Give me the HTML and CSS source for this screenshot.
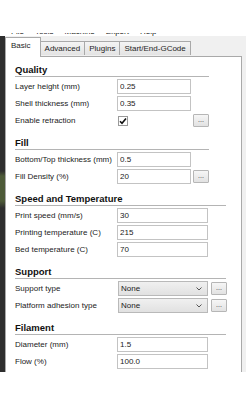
FILE: index.html
```html
<!DOCTYPE html>
<html lang="en">
<head>
    <meta charset="UTF-8">
    <meta name="viewport" content="width=device-width, initial-scale=1.0">
    <title>Cura - Basic settings</title>
    <link rel="stylesheet" href="styles.css">
</head>
<body>
    <div class="window">
        <div class="menubar">
            <div class="menu-items">
                <span>File</span>
                <span>Tools</span>
                <span>Machine</span>
                <span>Expert</span>
                <span>Help</span>
            </div>
        </div>

        <div class="frame">
            <div class="viewport-edge"></div>

            <div class="notebook">
                <div class="tabs">
                    <div class="tab active">Basic</div>
                    <div class="tab">Advanced</div>
                    <div class="tab">Plugins</div>
                    <div class="tab">Start/End-GCode</div>
                </div>

                <div class="page">
                    <div class="section">
                        <div class="section-title">Quality</div>
                        <div class="rows">
                            <label>Layer height (mm)</label>
                            <input class="field" type="text" value="0.25"><span></span>
                            <label>Shell thickness (mm)</label>
                            <input class="field" type="text" value="0.35"><span></span>
                            <label>Enable retraction</label>
                            <div class="check-cell">
                                <span class="checkbox">
                                    <svg width="8" height="8" viewBox="0 0 8 8"><path d="M1 4.2 L3 6.3 L7 1.4" fill="none" stroke="#111" stroke-width="1.6"/></svg>
                                </span>
                            </div>
                            <button class="more">...</button>
                        </div>
                    </div>

                    <div class="section">
                        <div class="section-title">Fill</div>
                        <div class="rows">
                            <label>Bottom/Top thickness (mm)</label>
                            <input class="field" type="text" value="0.5"><span></span>
                            <label>Fill Density (%)</label>
                            <input class="field" type="text" value="20">
                            <button class="more">...</button>
                        </div>
                    </div>

                    <div class="section wide">
                        <div class="section-title">Speed and Temperature</div>
                        <div class="rows">
                            <label>Print speed (mm/s)</label>
                            <input class="field" type="text" value="30"><span></span>
                            <label>Printing temperature (C)</label>
                            <input class="field" type="text" value="215"><span></span>
                            <label>Bed temperature (C)</label>
                            <input class="field" type="text" value="70"><span></span>
                        </div>
                    </div>

                    <div class="section wide">
                        <div class="section-title">Support</div>
                        <div class="rows combo-rows">
                            <label>Support type</label>
                            <div class="combo">None
                                <svg width="6" height="4" viewBox="0 0 6 4"><path d="M0.5 0.5 L3 3 L5.5 0.5" fill="none" stroke="#555" stroke-width="1"/></svg>
                            </div>
                            <button class="more">...</button>
                            <label>Platform adhesion type</label>
                            <div class="combo">None
                                <svg width="6" height="4" viewBox="0 0 6 4"><path d="M0.5 0.5 L3 3 L5.5 0.5" fill="none" stroke="#555" stroke-width="1"/></svg>
                            </div>
                            <button class="more">...</button>
                        </div>
                    </div>

                    <div class="section wide">
                        <div class="section-title">Filament</div>
                        <div class="rows">
                            <label>Diameter (mm)</label>
                            <input class="field" type="text" value="1.5"><span></span>
                            <label>Flow (%)</label>
                            <input class="field" type="text" value="100.0"><span></span>
                        </div>
                    </div>
                </div>
            </div>
        </div>
    </div>
</body>
</html>
```

FILE: styles.css
```css
body {
    margin: 0;
    background: #ffffff;
    font-family: "Liberation Sans", Arial, sans-serif;
    font-size: 8px;
    color: #1e1e1e;
}
.window {
    margin-top: 33px;
    height: 339px;
    display: flex;
    flex-direction: column;
    background: #f0f0f0;
    overflow: hidden;
}
.menubar {
    height: 3px;
    overflow: hidden;
    background: #ffffff;
}
.menu-items {
    display: flex;
    gap: 11px;
    padding-left: 11px;
    margin-top: -6px;
    line-height: 10px;
    color: #222;
}
.frame {
    flex: 1;
    display: flex;
    min-height: 0;
}
.viewport-edge {
    width: 5px;
    background: linear-gradient(to bottom, #2e2e2e 135px, #4d5a38 140px, #4d5a38 165px, #2e2e2e 172px);
}
.notebook {
    flex: 1;
    display: flex;
    flex-direction: column;
    margin-right: 4px;
    padding-top: 1px;
}
.tabs {
    display: flex;
    align-items: flex-end;
    height: 19px;
    position: relative;
    z-index: 1;
}
.tab {
    height: 14px;
    line-height: 13px;
    padding: 0 4px;
    border: 1px solid #a9a9a9;
    border-bottom: none;
    border-left: none;
    box-sizing: border-box;
    background: linear-gradient(to bottom, #f4f4f4, #e3e3e3);
    color: #1e1e1e;
    margin-bottom: 1px;
}
.tab.active {
    height: 20px;
    line-height: 16px;
    padding: 0 9px 0 5px;
    border-left: 1px solid #a9a9a9;
    background: #ffffff;
    margin-bottom: -1px;
}
.page {
    flex: 1;
    background: #ffffff;
    border: 1px solid #a9a9a9;
    border-bottom: none;
    padding: 7px 0 0 9px;
}
.section {
    width: 194px;
    margin-top: 9px;
}
.section:first-child {
    margin-top: 0;
}
.section.wide {
    width: 211px;
}
.section-title {
    font-size: 9.5px;
    font-weight: bold;
    line-height: 12px;
    color: #111;
    border-bottom: 1px solid #b4b4b4;
    margin-bottom: 2px;
}
.rows {
    display: grid;
    grid-template-columns: 100px 1fr 16px;
    grid-auto-rows: 15px;
    column-gap: 2px;
    row-gap: 2px;
    align-items: center;
}
.rows label {
    white-space: nowrap;
    color: #222;
}
.field {
    height: 15px;
    box-sizing: border-box;
    width: 100%;
    margin: 0;
    padding: 0 2px;
    border: 1px solid #c3c3c3;
    background: #ffffff;
    font: inherit;
    color: #1a1a1a;
    outline: none;
}
.check-cell {
    display: flex;
    align-items: center;
}
.checkbox {
    width: 10px;
    height: 10px;
    margin-left: 1px;
    box-sizing: border-box;
    border: 1px solid #9a9a9a;
    background: #ffffff;
    display: flex;
    align-items: center;
    justify-content: center;
}
.more {
    height: 13px;
    width: 16px;
    margin: 0;
    padding: 0 0 3px;
    border: 1px solid #b6b6b6;
    border-radius: 1px;
    background: linear-gradient(to bottom, #f6f6f6, #e2e2e2);
    font: inherit;
    font-size: 7px;
    line-height: 7px;
    color: #333;
}
.combo-rows {
    grid-template-columns: 100px 1fr 15px;
    column-gap: 3px;
}
.combo {
    height: 15px;
    box-sizing: border-box;
    border: 1px solid #b9b9b9;
    background: linear-gradient(to bottom, #f0f0f0, #e1e1e1);
    padding: 0 5px 0 2px;
    display: flex;
    align-items: center;
    justify-content: space-between;
    color: #1a1a1a;
}
```
